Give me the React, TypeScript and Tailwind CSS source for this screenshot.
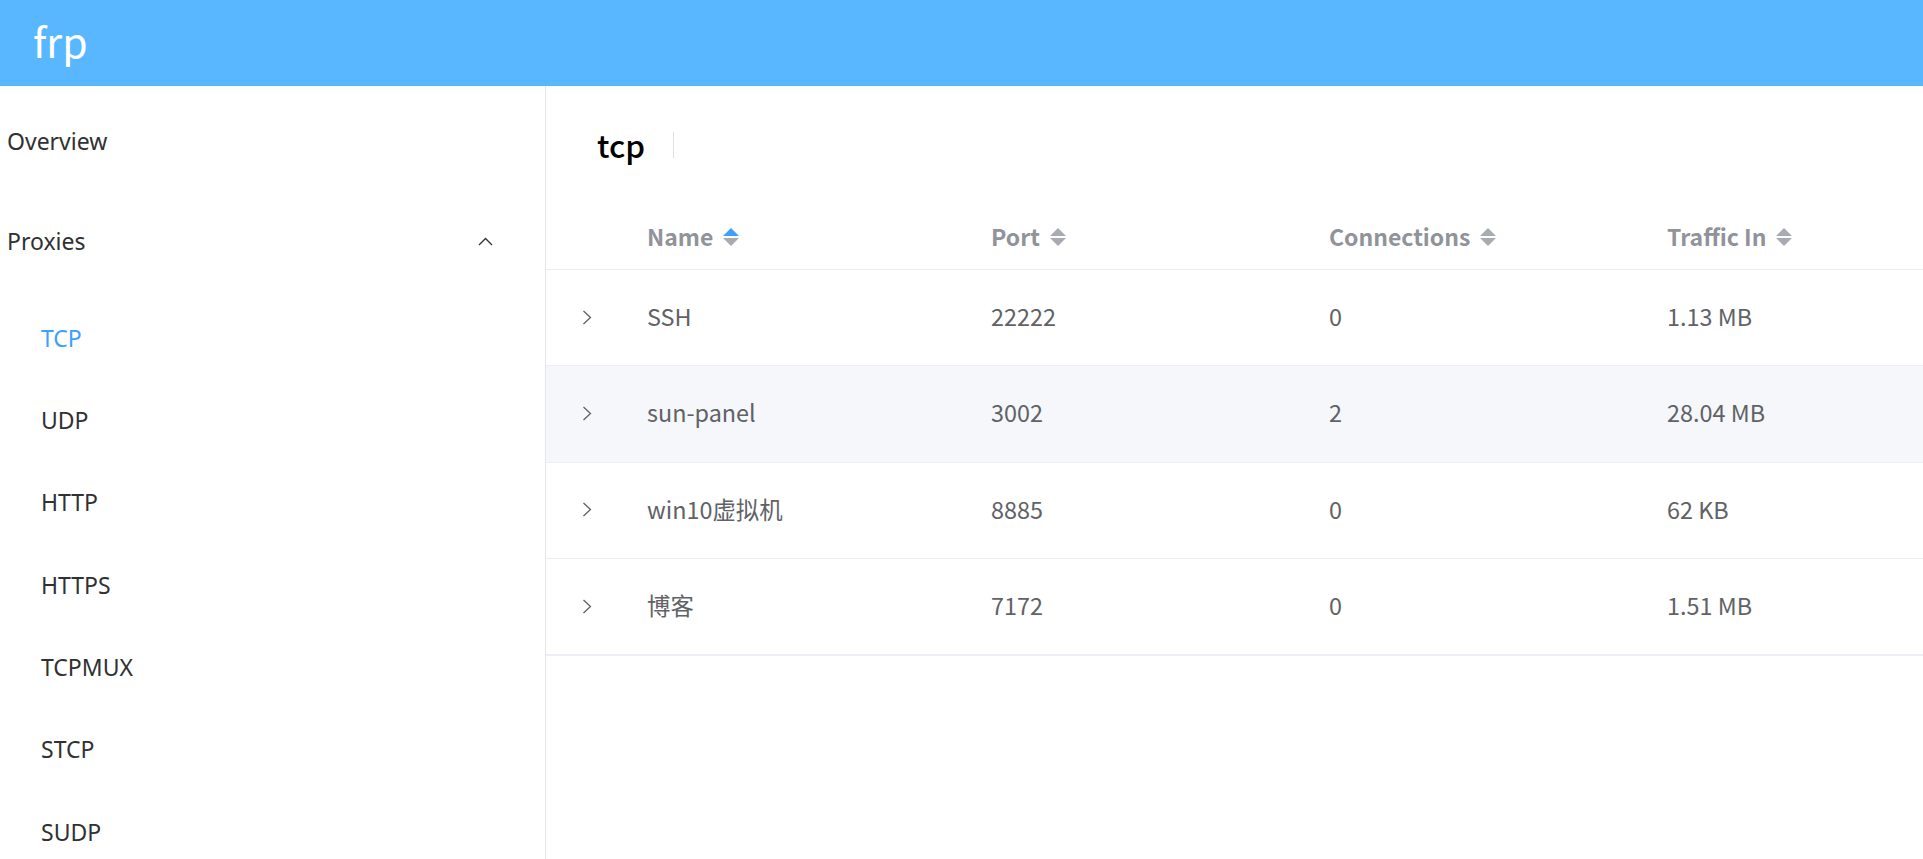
import React from 'react';

const SIDE_FONT = { fontFamily: '"Noto Sans", "Noto Sans CJK SC", sans-serif' };
const TABLE_FONT = { fontFamily: '"Noto Sans CJK SC", "Noto Sans", sans-serif' };

const PROXY_TYPES = ['TCP', 'UDP', 'HTTP', 'HTTPS', 'TCPMUX', 'STCP', 'SUDP'];

const COLUMNS = [
  { key: 'name', label: 'Name', width: 'w-[344px] shrink-0', active: true },
  { key: 'port', label: 'Port', width: 'w-[338px] shrink-0', active: false },
  { key: 'conns', label: 'Connections', width: 'w-[338px] shrink-0', active: false },
  { key: 'trafficIn', label: 'Traffic In', width: 'flex-1 min-w-0', active: false },
];

const ROWS = [
  { name: 'SSH', port: '22222', conns: '0', trafficIn: '1.13 MB' },
  { name: 'sun-panel', port: '3002', conns: '2', trafficIn: '28.04 MB' },
  { name: 'win10虚拟机', port: '8885', conns: '0', trafficIn: '62 KB' },
  { name: '博客', port: '7172', conns: '0', trafficIn: '1.51 MB' },
];

const SortCaret = ({ active }: { active: boolean }) => (
  <svg width="16" height="18" viewBox="0 0 16 18" className="ml-[10px] shrink-0" aria-hidden="true">
    <polygon points="8,0 16,8 0,8" fill={active ? '#409eff' : '#a8abb2'} />
    <polygon points="0,10 16,10 8,18" fill="#a8abb2" />
  </svg>
);

const ChevronRight = () => (
  <svg width="10" height="15" viewBox="0 0 10 15" aria-hidden="true">
    <path d="M1.5 1 L8.5 7.5 L1.5 14" fill="none" stroke="#606266" strokeWidth="1.3" />
  </svg>
);

const ChevronUp = () => (
  <svg width="15" height="9" viewBox="0 0 15 9" aria-hidden="true">
    <path d="M1 8 L7.5 1.5 L14 8" fill="none" stroke="#303133" strokeWidth="1.3" />
  </svg>
);

export default function App() {
  return (
    <div className="h-screen w-full overflow-hidden bg-white flex flex-col">
      {/* Header */}
      <header className="h-[86px] shrink-0 bg-[#58b7ff] flex items-center pl-[33px] pb-[6px]">
        <span className="text-white text-[41px] leading-none" style={TABLE_FONT}>
          frp
        </span>
      </header>

      <div className="flex flex-1 min-h-0">
        {/* Sidebar */}
        <aside className="w-[546px] shrink-0 border-r border-[#e6e6e6] text-[#303133] text-[23px]" style={SIDE_FONT}>
          <div className="h-[108px] flex items-center pl-[7px] pt-[3px]">Overview</div>
          <div className="h-[100px] flex items-center justify-between pl-[7px] pr-[52px] pb-[5px]">
            <span>Proxies</span>
            <ChevronUp />
          </div>
          <ul className="pt-[3px]">
            {PROXY_TYPES.map((t) => (
              <li
                key={t}
                className={`h-[82.3px] flex items-center pl-[41px] ${t === 'TCP' ? 'text-[#409eff]' : ''}`}
              >
                {t}
              </li>
            ))}
          </ul>
        </aside>

        {/* Main */}
        <main className="flex-1 min-w-0 overflow-hidden" style={TABLE_FONT}>
          <div className="h-[120px] flex items-center pl-[51px] pb-[2px]">
            <span className="text-[31.5px] font-medium text-black leading-none">tcp</span>
            <span className="ml-[28px] w-px h-[26px] bg-[#dcdfe6]" />
          </div>

          <div className="w-full border-b border-[#ebeef5]">
            {/* Table header */}
            <div className="h-[64px] flex items-center pb-[2px] border-b border-[#ebeef5] text-[23px] font-bold text-[#909399]">
              <div className="w-[81px] shrink-0" />
              {COLUMNS.map((c) => (
                <div key={c.key} className={`${c.width} px-[20px] flex items-center`}>
                  <span>{c.label}</span>
                  <SortCaret active={c.active} />
                </div>
              ))}
            </div>

            {/* Table body */}
            {ROWS.map((r, i) => (
              <div
                key={r.name}
                className={`h-[96.3px] flex items-center pb-[2px] border-b border-[#ebeef5] text-[23.4px] text-[#606266] ${
                  i === 1 ? 'bg-[#f5f7fa]' : ''
                }`}
              >
                <div className="w-[81px] shrink-0 flex items-center justify-center pt-[1px]">
                  <ChevronRight />
                </div>
                <div className="w-[344px] shrink-0 px-[20px]">{r.name}</div>
                <div className="w-[338px] shrink-0 px-[20px]">{r.port}</div>
                <div className="w-[338px] shrink-0 px-[20px]">{r.conns}</div>
                <div className="flex-1 min-w-0 px-[20px]">{r.trafficIn}</div>
              </div>
            ))}
          </div>
        </main>
      </div>
    </div>
  );
}
